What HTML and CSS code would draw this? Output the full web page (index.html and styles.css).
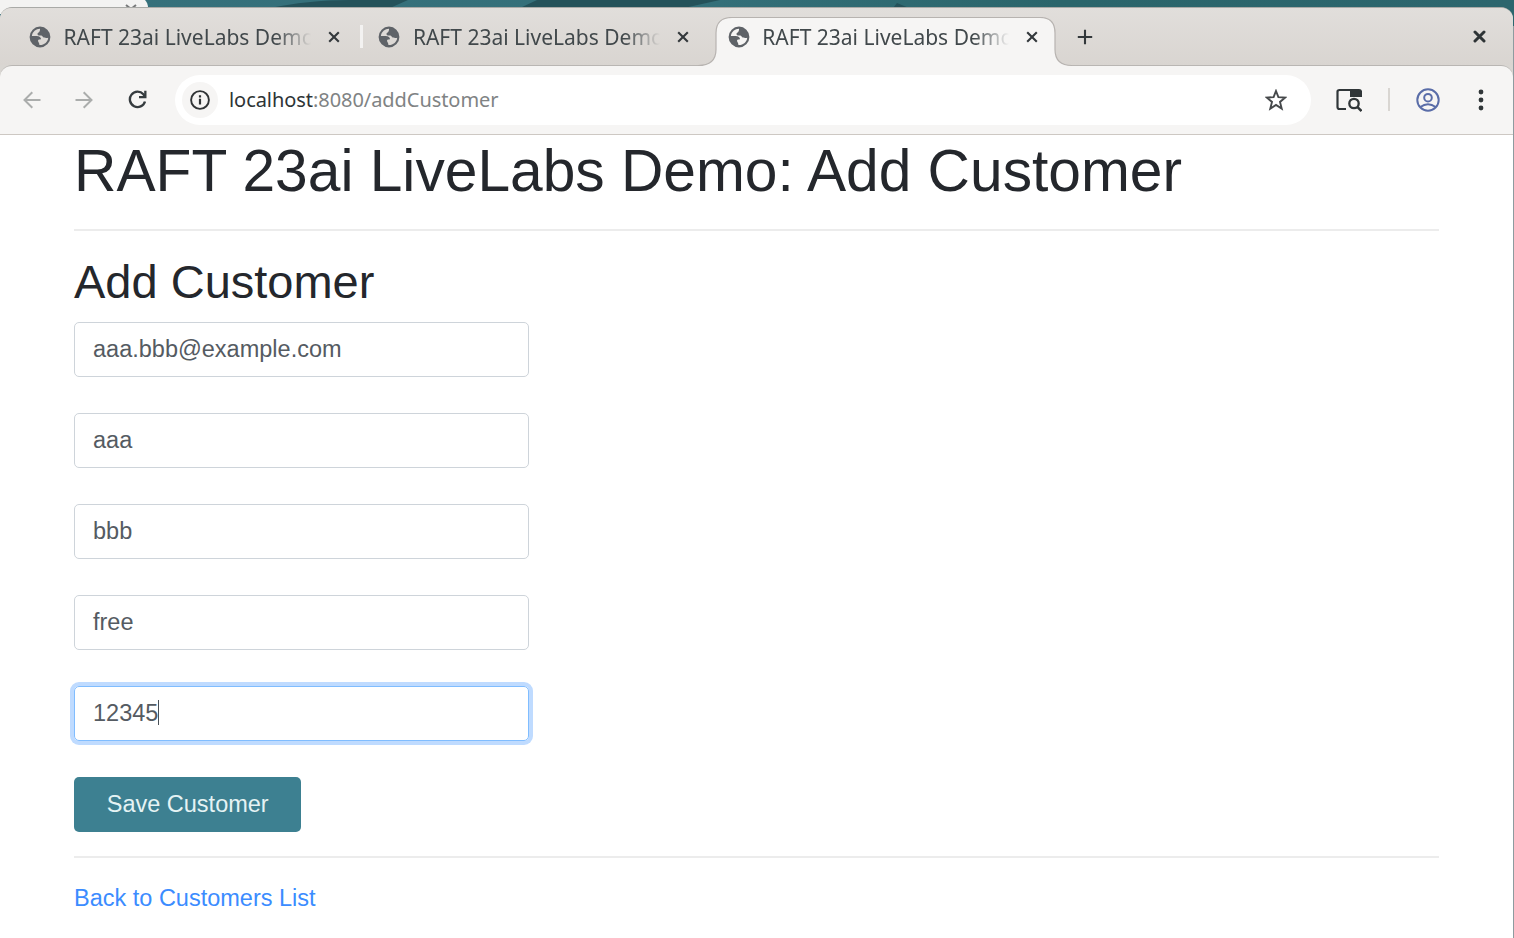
FILE: index.html
```html
<!DOCTYPE html>
<html lang="en">
<head>
<meta charset="utf-8">
<title>RAFT 23ai LiveLabs Demo</title>
<link rel="stylesheet" href="styles.css">
</head>
<body>
<svg class="defs" width="0" height="0">
  <symbol id="globe" viewBox="0 0 22 22">
    <path fill-rule="evenodd" fill="#5f6368" d="M11 .6a10.400 10.400 0 1 0 0 20.800A10.400 10.400 0 0 0 11 .6zM11 2.800C7 2.800 3.300 6 2.900 9.900L7.500 10C10.500 10 12 11.500 12 13.200c-2.500 0-3.400.7-2.800 2.200.5 1.400 1.200 1.200 1.200 3.700 4.600.3 8.600-3.200 8.800-7.300-2 .8-2.700-.2-4.200-.2-1.500 0-1.200-2-3-2-2 0-3.500.2-3.500-1.500C8.500 6.500 11.300 6.500 11 2.800z"/>
  </symbol>
  <symbol id="cross" viewBox="0 0 12 12"><path d="M1.200 1.200l9.600 9.600M10.800 1.200L1.200 10.800" fill="none" stroke="currentColor" stroke-width="2.100"/></symbol>
</svg>
<div class="desktop">
  <svg class="wallpaper" width="1514" height="26" viewBox="0 0 1514 26">
    <defs><linearGradient id="sea"><stop offset="0" stop-color="#35707b"/><stop offset=".45" stop-color="#34707a"/><stop offset=".7" stop-color="#2a656b"/><stop offset="1" stop-color="#2c666e"/></linearGradient></defs>
    <path fill="url(#sea)" d="M0 0h1514v26H0z"/>
    <path fill="#24525a" d="M270 8C295 3 320 0 350 0H408L390 8zM520 8L537 0H720L684 8zM893 8l4-5 12 5z"/>
    <path fill="#f3f3f2" d="M0 0h145q3 3 3 8v6H0z"/>
    <path d="M126 5l5 4 5-4" fill="none" stroke="#77797a" stroke-width="2"/>
  </svg>
  <div class="window">
    <div class="tabstrip">
      <div class="tab"><svg class="globe"><use href="#globe"/></svg><span class="tab-title">RAFT 23ai LiveLabs Demo</span><svg class="tab-close"><use href="#cross"/></svg><i class="tab-rule"></i></div>
      <div class="tab"><svg class="globe"><use href="#globe"/></svg><span class="tab-title">RAFT 23ai LiveLabs Demo</span><svg class="tab-close"><use href="#cross"/></svg></div>
      <div class="tab tab-active">
        <svg class="tab-shape" width="376" height="50" viewBox="0 0 376 50"><path d="M0 50v-1.500q18 0 18-16V16Q18 .5 34 .5H342Q357 .5 357 16V32.500q0 16 17 16v1.500z" fill="#f6f5f4"/><path d="M0 48.500q18 0 18-16V16Q18 .5 34 .5H342Q357 .5 357 16V32.500q0 16 17 16" fill="none" stroke="#b7b3b0" stroke-width="1.200"/></svg>
        <svg class="globe"><use href="#globe"/></svg><span class="tab-title">RAFT 23ai LiveLabs Demo</span><svg class="tab-close"><use href="#cross"/></svg>
      </div>
      <svg class="new-tab" width="16" height="16" viewBox="0 0 16 16"><path d="M8 .8v14.400M.8 8h14.400" stroke="#33383b" stroke-width="2.100"/></svg>
      <svg class="window-close" width="13" height="13" viewBox="0 0 13 13"><path d="M2 2l9 9M11 2l-9 9" stroke="#2e3436" stroke-width="3" stroke-linecap="round"/></svg>
    </div>
    <div class="toolbar">
      <svg class="nav back" width="18" height="18" viewBox="0 0 18 18"><path d="M17.500 9H1.500M9.300 1.200L1.500 9l7.800 7.800" fill="none" stroke="#abadac" stroke-width="2"/></svg>
      <svg class="nav forward" width="18" height="18" viewBox="0 0 18 18"><path d="M.5 9h16M8.700 1.200L16.500 9l-7.800 7.800" fill="none" stroke="#abadac" stroke-width="2"/></svg>
      <svg class="nav reload" width="19" height="19" viewBox="0 0 19 19"><path d="M17 11.500A7.700 7.700 0 1 1 15.400 4.300L17 6.500" fill="none" stroke="#363c3f" stroke-width="2.400"/><path d="M18.500.8v7.500H11V6.100h5.200V.8z" fill="#363c3f"/></svg>
      <div class="omnibox">
        <span class="site-info"><svg width="20" height="20" viewBox="0 0 20 20"><circle cx="10" cy="10" r="8.900" fill="none" stroke="#303436" stroke-width="1.900"/><path d="M10 8.800v5.700M10 5.200v2.200" stroke="#303436" stroke-width="2.200"/></svg></span>
        <span class="url"><b>localhost</b>:8080/addCustomer</span>
        <svg class="star" width="22" height="22" viewBox="0 0 22 22"><path d="M11 2l2.400 6.200 6.800.4-5.200 4.300 1.700 6.700L11 15.900l-5.700 3.700L7 12.900 1.800 8.600l6.800-.4z" fill="none" stroke="#46494b" stroke-width="1.900"/></svg>
      </div>
      <svg class="search-tabs" width="26" height="24" viewBox="0 0 26 24"><path d="M10 21H3.500Q1.500 21 1.500 19V3.500Q1.500 2 3.500 2H23q2 0 2 2v5" fill="none" stroke="#303638" stroke-width="2.200"/><path d="M14 2h11v7H14z" fill="#303638"/><circle cx="18" cy="15.500" r="4.700" fill="#f6f5f4" stroke="#303638" stroke-width="2.300"/><path d="M21.300 18.800l4.200 4.200" stroke="#303638" stroke-width="2.500"/></svg>
      <i class="tool-rule"></i>
      <svg class="profile" width="24" height="24" viewBox="0 0 24 24" fill="none" stroke="#5a6da8" stroke-width="2"><circle cx="12" cy="12" r="10.700"/><circle cx="12" cy="9.700" r="3.800"/><path d="M4.300 19q7.700-5.400 15.400 0"/></svg>
      <svg class="menu" width="6" height="22" viewBox="0 0 6 22" fill="#303638"><circle cx="3" cy="3" r="2.400"/><circle cx="3" cy="11" r="2.400"/><circle cx="3" cy="19" r="2.400"/></svg>
    </div>
    <main class="page">
      <h1>RAFT 23ai LiveLabs Demo: Add Customer</h1>
      <hr>
      <h2>Add Customer</h2>
      <form class="form">
        <div class="field"><span>aaa.bbb@example.com</span></div>
        <div class="field"><span>aaa</span></div>
        <div class="field"><span>bbb</span></div>
        <div class="field"><span>free</span></div>
        <div class="field focused"><span>12345</span><i class="caret"></i></div>
        <button class="save" type="button">Save Customer</button>
      </form>
      <hr class="bottom">
      <a class="back-link">Back to Customers List</a>
    </main>
  </div>
</div>
</body>
</html>
```
FILE: styles.css
```css
* { box-sizing: border-box; }
body { margin: 0; overflow: hidden; font-family: "Liberation Sans", Arial, sans-serif; color: #24272c; }
svg { flex: none; display: block; }
.defs { position: absolute; }
.desktop { position: relative; height: 938px; padding-top: 7px; background: #8e9b9f; }
.wallpaper { position: absolute; top: 0; left: 0; }
.window { position: relative; width: 1513px; height: 931px; border-top: 1px solid #a9aaa7; border-radius: 12px 12px 0 0; overflow: hidden; background: #d9d6d2; }
.tabstrip { height: 57px; display: flex; align-items: center; background: linear-gradient(#e1dedb, #d9d5d1); }
.tab { position: relative; width: 349.400px; height: 57px; padding-left: 29px; display: flex; align-items: center; flex: none; }
.tab > .globe, .tab > .tab-title, .tab > .tab-close { position: relative; }
.globe { width: 22px; height: 22px; }
.tab-title { flex: none; width: 247px; margin-left: 12.500px; overflow: hidden; white-space: nowrap; font: 21px/30px "Noto Sans", sans-serif; color: #41484b; -webkit-mask-image: linear-gradient(90deg, #000 212px, transparent 247px); mask-image: linear-gradient(90deg, #000 212px, transparent 247px); }
.tab-close { width: 12px; height: 12px; margin-left: 17px; color: #33383b; }
.tab-rule { flex: none; width: 3px; height: 23px; margin-left: 20.500px; background: #f3f2f1; }
.tab-shape { position: absolute; left: -1px; top: 9px; }
.new-tab { margin-left: 29px; }
.window-close { margin: 0 27px 0 auto; }
.toolbar { height: 70px; display: flex; align-items: center; padding: 0 0 1px 22.500px; background: #f6f5f4; border-top: 1px solid #b9b6b3; border-bottom: 1px solid #cdc8c3; border-radius: 12px 12px 0 0; }
.tab-active { z-index: 2; }
.forward { margin-left: 34.500px; }
.reload { margin-left: 34.500px; }
.omnibox { width: 1136px; height: 50px; margin-left: 28.500px; padding: 0 24px 0 7px; display: flex; align-items: center; border-radius: 25px; background: #fff; }
.site-info { width: 36px; height: 36px; display: grid; place-items: center; border-radius: 50%; background: #f6f5f4; }
.url { margin-left: 11px; font: 20px/30px "Noto Sans", sans-serif; letter-spacing: -.06px; color: #808384; white-space: nowrap; }
.url b { font-weight: 400; color: #2e3436; }
.star { margin-left: auto; }
.search-tabs { margin-left: 25px; }
.tool-rule { width: 2px; height: 23px; margin-left: 26px; background: #d9d6d2; }
.profile { margin-left: 26px; }
.menu { margin-left: 38px; }
.page { height: 803px; padding: 0 74px; background: #fff; }
h1, h2 { margin: 0; font-weight: 400; white-space: nowrap; }
h1 { height: 94px; padding-top: 2px; font-size: 58.700px; line-height: 68px; }
hr { height: 2px; margin: 0; border: 0; background: #ececec; }
h2 { height: 91px; padding-top: 23px; font-size: 47px; line-height: 56px; }
.form { display: flex; flex-direction: column; align-items: flex-start; gap: 35.600px; }
.field { width: 454.600px; height: 55.400px; padding: 0 18px 2px; display: flex; align-items: center; border: 1px solid #ced4da; border-radius: 5px; font-size: 23.500px; line-height: 34px; color: #555b62; }
.focused { border-color: #80bdff; box-shadow: 0 0 0 4px #bfdbff; }
.caret { width: 1px; height: 25px; background: #495057; }
.save { width: 227.400px; height: 55.400px; padding: 0; border: 0; border-radius: 5px; background: #3d8091; color: #e5f3f4; font: 23.500px "Liberation Sans", Arial, sans-serif; }
.bottom { margin-top: 23.600px; }
.back-link { display: block; margin-top: 23px; font-size: 23.500px; line-height: 34px; color: #3b8cff; }
```
